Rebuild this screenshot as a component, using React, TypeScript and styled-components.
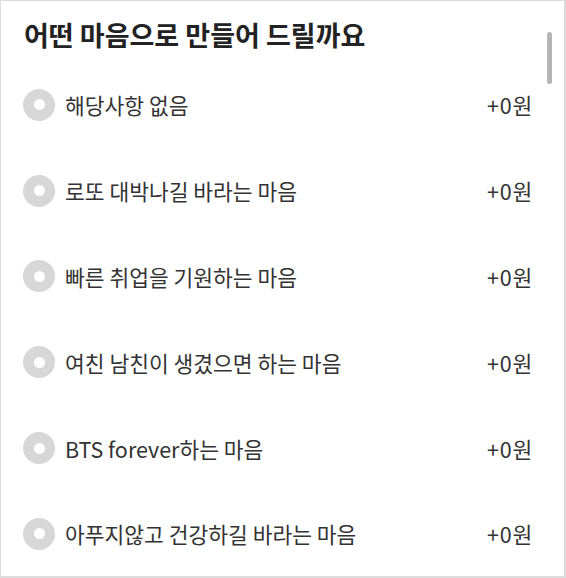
import React from "react";
import styled, { createGlobalStyle } from "styled-components";

const Global = createGlobalStyle`
  html, body { margin: 0; padding: 0; background: #fff; }
  * { box-sizing: border-box; }
`;

const Frame = styled.div`
  position: relative;
  width: 566px;
  height: 578px;
  border-top: 1px solid #dcdcdc;
  border-left: 1px solid #dcdcdc;
  border-right: 2px solid #dcdcdc;
  border-bottom: 2px solid #dcdcdc;
  background: #fff;
  overflow: hidden;
  font-family: "Noto Sans CJK KR", "Noto Sans", sans-serif;
`;

const Title = styled.h2`
  margin: 0;
  padding: 15px 0 0 23px;
  font-size: 27px;
  font-weight: 700;
  color: #222;
  line-height: 38px;
`;

const List = styled.div`
  display: flex;
  flex-direction: column;
  padding-top: 8px;
`;

const Row = styled.label`
  display: flex;
  align-items: center;
  height: 85.8px;
  padding: 0 31px 0 22px;
`;

const Radio = styled.span`
  flex: none;
  width: 32px;
  height: 32px;
  border-radius: 50%;
  background: #d7d7d7;
  display: flex;
  align-items: center;
  justify-content: center;
  &::after {
    content: "";
    width: 11px;
    height: 11px;
    border-radius: 50%;
    background: #fff;
  }
`;

const Label = styled.span`
  flex: 1;
  margin-left: 10px;
  font-size: 21.5px;
  color: #333;
`;

const Price = styled.span`
  font-size: 21.5px;
  letter-spacing: 0.8px;
  color: #333;
`;

const ScrollThumb = styled.div`
  position: absolute;
  left: 546px;
  top: 31px;
  width: 5px;
  height: 52px;
  border-radius: 3px;
  background: #b5b5b5;
`;

const items = [
  "해당사항 없음",
  "로또 대박나길 바라는 마음",
  "빠른 취업을 기원하는 마음",
  "여친 남친이 생겼으면 하는 마음",
  "BTS forever하는 마음",
  "아푸지않고 건강하길 바라는 마음",
];

export default function App() {
  return (
    <>
      <Global />
      <Frame>
        <Title>어떤 마음으로 만들어 드릴까요</Title>
        <List>
          {items.map((t) => (
            <Row key={t}>
              <Radio />
              <Label>{t}</Label>
              <Price>+0원</Price>
            </Row>
          ))}
        </List>
        <ScrollThumb />
      </Frame>
    </>
  );
}
